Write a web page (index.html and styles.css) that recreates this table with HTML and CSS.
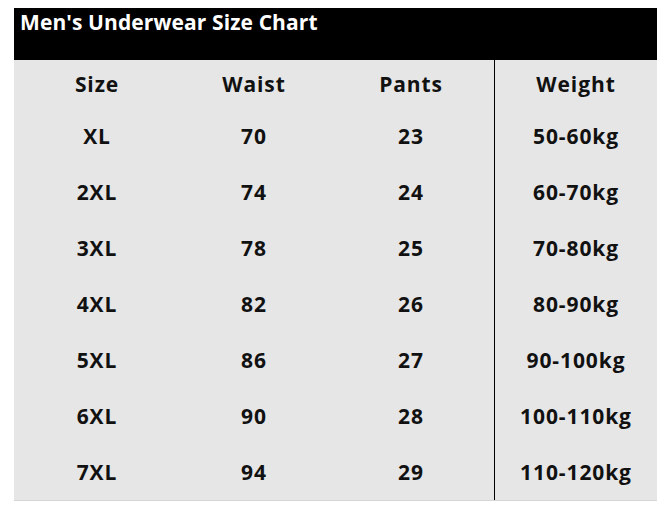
FILE: index.html
```html
<!DOCTYPE html>
<html>
<head>
<meta charset="utf-8">
<link rel="stylesheet" href="styles.css">
</head>
<body>
<div class="chart">
  <div class="title">Men's Underwear Size Chart</div>
  <div class="body">
    <div class="main">
      <div class="row head"><span>Size</span><span>Waist</span><span>Pants</span></div>
      <div class="row"><span>XL</span><span>70</span><span>23</span></div>
      <div class="row"><span>2XL</span><span>74</span><span>24</span></div>
      <div class="row"><span>3XL</span><span>78</span><span>25</span></div>
      <div class="row"><span>4XL</span><span>82</span><span>26</span></div>
      <div class="row"><span>5XL</span><span>86</span><span>27</span></div>
      <div class="row"><span>6XL</span><span>90</span><span>28</span></div>
      <div class="row"><span>7XL</span><span>94</span><span>29</span></div>
    </div>
    <div class="weight">
      <div class="row head"><span>Weight</span></div>
      <div class="row"><span>50-60kg</span></div>
      <div class="row"><span>60-70kg</span></div>
      <div class="row"><span>70-80kg</span></div>
      <div class="row"><span>80-90kg</span></div>
      <div class="row"><span>90-100kg</span></div>
      <div class="row"><span>100-110kg</span></div>
      <div class="row"><span>110-120kg</span></div>
    </div>
  </div>
</div>
</body>
</html>
```
FILE: styles.css
```css
html, body {
  margin: 0;
  padding: 0;
  background: #ffffff;
}
.chart {
  margin: 8px 0 0 14px;
  width: 643px;
  font-family: "Open Sans", "Noto Sans", sans-serif;
  font-weight: 700;
}
.title {
  background: #000000;
  color: #ffffff;
  height: 52px;
  font-size: 21px;
  line-height: 28px;
  padding-left: 6px;
  letter-spacing: 0.1px;
}
.body {
  display: flex;
  background: #e6e6e6;
  height: 440px;
  border-bottom: 1px solid #d6d6d6;
}
.main {
  width: 480px;
  border-right: 1px solid #000000;
}
.weight {
  flex: 1;
}
.row {
  display: flex;
  height: 56px;
  align-items: center;
  font-size: 21px;
  color: #111111;
  letter-spacing: 0.9px;
}
.row.head {
  height: 48px;
}
.row span {
  flex: 1;
  text-align: center;
}
.main .row span {
  flex: none;
  width: 160px;
}
.main .row span:first-child {
  padding-left: 6px;
  width: 154px;
}
.main .row span:last-child {
  padding-right: 6px;
  width: 154px;
}
```
